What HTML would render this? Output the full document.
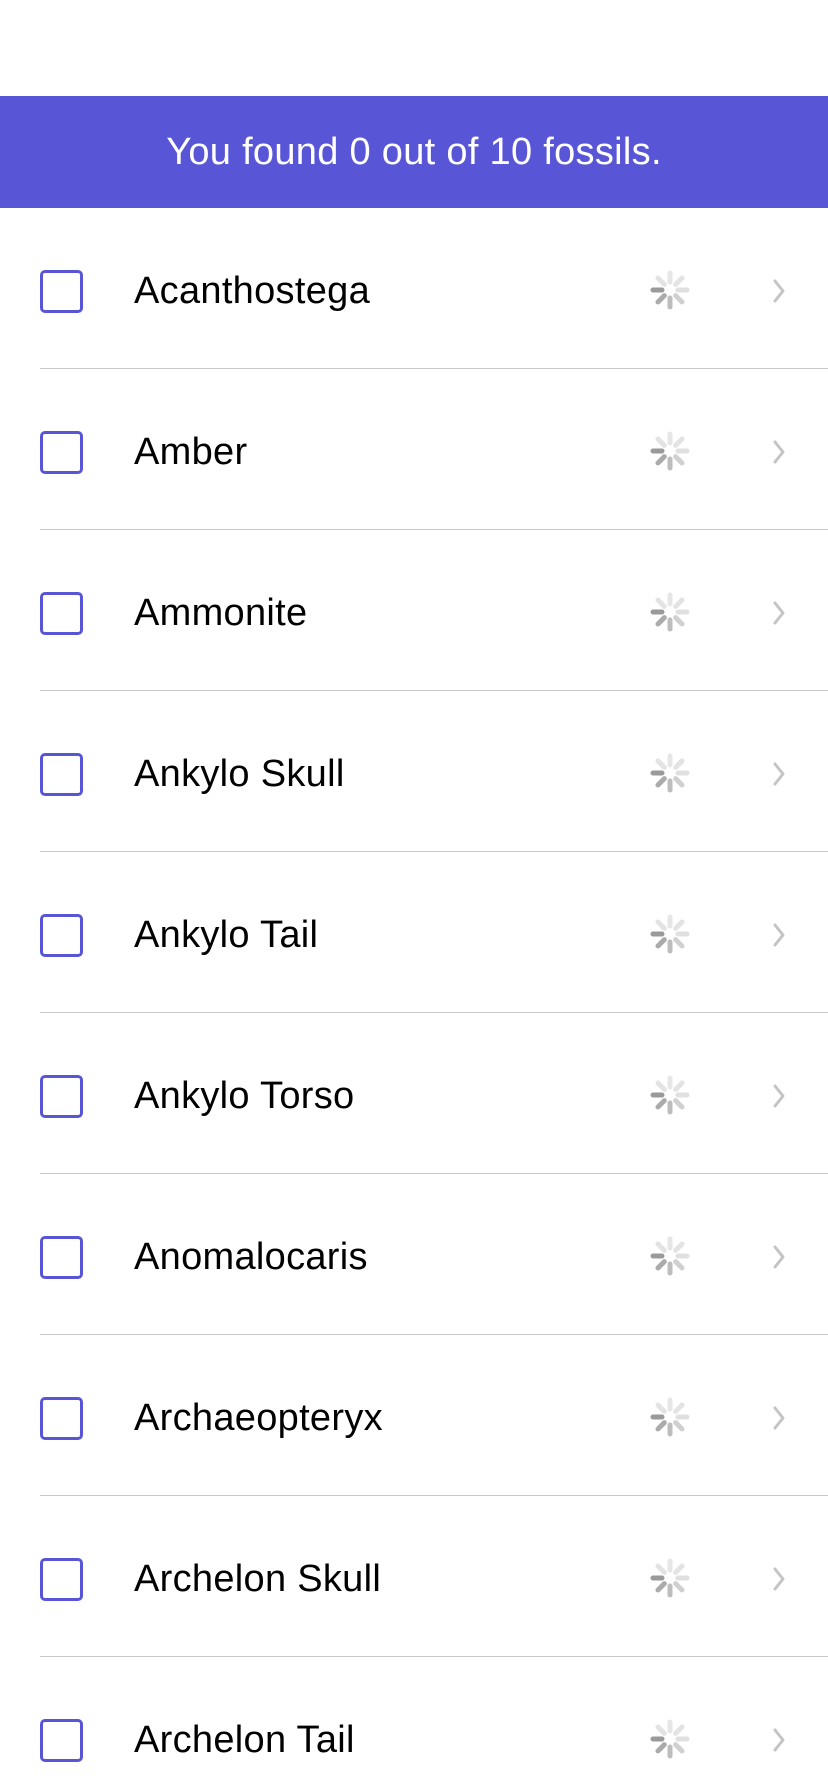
<!DOCTYPE html>
<html><head><meta charset="utf-8"><style>
*{margin:0;padding:0;box-sizing:border-box}
html,body{width:828px;height:1792px;overflow:hidden}
body{background:#fff;font-family:"Liberation Sans",sans-serif;position:relative}
.hdr{position:absolute;top:96px;left:0;width:828px;height:112px;background:#5856D6;color:#fff;font-size:38px;text-align:center;line-height:112px;letter-spacing:0.3px}
.row{position:absolute;left:0;width:828px;height:161px}
.cb{position:absolute;left:40px;top:62px;width:43px;height:43px;border:3px solid #5856D6;border-radius:5px}
.nm{position:absolute;left:134px;top:3px;line-height:161px;font-size:38px;color:#000;letter-spacing:0.3px}
.sp{position:absolute;left:650px;top:62px}
.ch{position:absolute;left:770px;top:69px}
.sep{position:absolute;left:40px;right:0;bottom:0;height:1px;background:#c8c7cc}
</style></head><body>
<div class="hdr">You found 0 out of 10 fossils.</div>
<div id="list"></div>
<script>
var names=["Acanthostega","Amber","Ammonite","Ankylo Skull","Ankylo Tail","Ankylo Torso","Anomalocaris","Archaeopteryx","Archelon Skull","Archelon Tail"];
var sp='<svg width="40" height="40" viewBox="-20 -20 40 40">';
var cols=["#e6e6e6","#e3e3e3","#e0e0e0","#d0d0d0","#bdbdbd","#ababab","#9a9a9a","#e3e3e3"];
for(var k=0;k<8;k++){sp+='<line x1="0" y1="-8" x2="0" y2="-17" stroke="'+cols[k]+'" stroke-width="5" stroke-linecap="round" transform="rotate('+(k*45)+')"/>';}
sp+='</svg>';
var h='';
for(var i=0;i<names.length;i++){
h+='<div class="row" style="top:'+(208+161*i)+'px"><div class="cb"></div><div class="nm">'+names[i]+'</div><div class="sp">'+sp+'</div><svg class="ch" width="18" height="28" viewBox="0 0 18 28"><path d="M5 4 L13 14 L5 24" fill="none" stroke="#c4c4c7" stroke-width="3" stroke-linecap="round" stroke-linejoin="round"/></svg><div class="sep"></div></div>';
}
document.getElementById('list').innerHTML=h;
</script>
</body></html>
